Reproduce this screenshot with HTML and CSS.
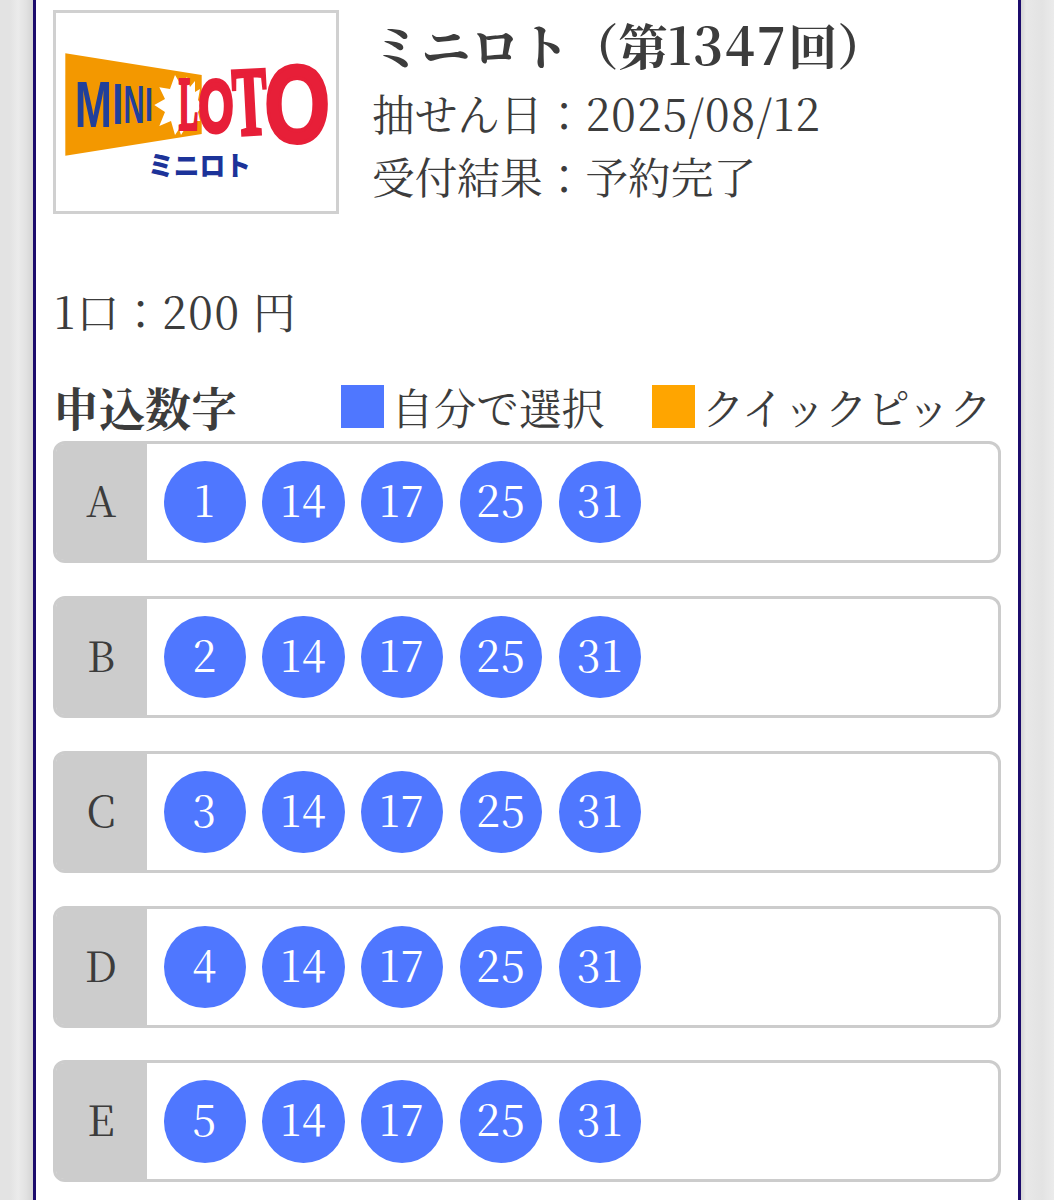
FILE: index.html
```
<!DOCTYPE html>
<html lang="ja">

<head>
    <meta charset="UTF-8">
    <meta name="viewport" content="width=device-width, initial-scale=1.0">
    <title>ミニロト（第1347回）</title>
    <link rel="stylesheet" href="styles.css">
</head>

<body>
    <div id="container">
        <div class="head">
            <div class="logo">
                <svg viewBox="0 0 280 198" width="280" height="198">
                    <polygon class="orange" points="9.3,40.3 145.7,62 145.7,121 9.3,142.7" />
                    <polygon class="burst" points="98.3,92 109,86 103.3,74.3 114,76 119,62 125,72 131,64 134,74 139,68 139,79 144,76 142,87 145.7,92 142,99 144,108 138,108 136,118 130,114 125,122 123,116 119,122 115,108 103.3,113 109,99" />
                    <g class="mini">
                        <text transform="translate(18.7 114.3) scale(.7 1)" font-size="64">M</text>
                        <text transform="translate(56.3 111.3) scale(.7 1)" font-size="57">I</text>
                        <text transform="translate(67.6 109.6) scale(.55 1)" font-size="53">N</text>
                        <text transform="translate(89 108) scale(.6 1)" font-size="48">I</text>
                    </g>
                    <g class="loto">
                        <text class="serif" transform="translate(123 115.5) scale(.39 1)" font-size="73">L</text>
                        <text transform="translate(142.4 118.5) scale(.6 1)" font-size="75">O</text>
                        <text class="serif" transform="translate(178.5 122) rotate(-3) scale(.53 1)" font-size="97">T</text>
                        <text transform="translate(208.6 129) scale(.77 1)" font-size="109">O</text>
                    </g>
                    <text class="kana" x="92" y="163" textLength="103" lengthAdjust="spacingAndGlyphs">ミニロト</text>
                </svg>
            </div>
            <div class="info">
                <h1>ミニロト（第<span class="num">1347</span>回）</h1>
                <p>抽せん日：<span class="num">2025/08/12</span></p>
                <p>受付結果：予約完了</p>
            </div>
        </div>

        <p class="price"><span class="num">1</span>口：<span class="num">200</span><span class="yen">円</span></p>

        <div class="legend">
            <h2>申込数字</h2>
            <div class="item"><span class="mark blue"></span>自分で選択</div>
            <div class="item quick"><span class="mark yellow"></span>クイックピック</div>
        </div>

        <div class="row">
            <div class="label">A</div>
            <ul>
                <li>1</li>
                <li>14</li>
                <li>17</li>
                <li>25</li>
                <li>31</li>
            </ul>
        </div>
        <div class="row">
            <div class="label">B</div>
            <ul>
                <li>2</li>
                <li>14</li>
                <li>17</li>
                <li>25</li>
                <li>31</li>
            </ul>
        </div>
        <div class="row">
            <div class="label">C</div>
            <ul>
                <li>3</li>
                <li>14</li>
                <li>17</li>
                <li>25</li>
                <li>31</li>
            </ul>
        </div>
        <div class="row">
            <div class="label">D</div>
            <ul>
                <li>4</li>
                <li>14</li>
                <li>17</li>
                <li>25</li>
                <li>31</li>
            </ul>
        </div>
        <div class="row">
            <div class="label">E</div>
            <ul>
                <li>5</li>
                <li>14</li>
                <li>17</li>
                <li>25</li>
                <li>31</li>
            </ul>
        </div>
    </div>
</body>

</html>
```
FILE: styles.css
```
* {
    box-sizing: border-box;
    margin: 0;
    padding: 0;
}

body {
    height: 1200px;
    overflow: hidden;
    color: #3c3c3c;
    font-family: "Noto Serif CJK JP", "Liberation Serif", "Noto Sans CJK JP", serif;
    font-size: 42.7px;
    font-weight: 400;
    background: linear-gradient(to right, #e3e3e3 10px, #ebebeb 18px, #e2e2e2 26px, #d4d4d4 33px, #d4d4d4 1021px, #e8e8e8 1026px, #e3e3e3 1042px, #ebebeb 1054px);
}

#container {
    width: 988px;
    height: 1200px;
    margin-left: 33px;
    padding: 10px 17px 0 17px;
    border: solid #1c0c6c;
    border-width: 0 3px;
    background: #fff;
}

.head {
    display: flex;
    height: 204px;
}

.logo {
    width: 286px;
    height: 204px;
    border: solid 3px #d0d0d0;
}

.logo svg {
    display: block;
}

.orange {
    fill: #f39800;
}

.burst {
    fill: #fff;
}

.mini {
    fill: #21409a;
    font-family: "Liberation Sans", sans-serif;
    font-weight: bold;
}

.loto {
    fill: #e71f38;
    stroke: #e71f38;
    stroke-width: 4px;
    font-family: "Liberation Sans", sans-serif;
    font-weight: bold;
}

.serif {
    font-family: "Liberation Serif", serif;
}

.kana {
    fill: #1c3399;
    font-family: "Noto Sans CJK JP", sans-serif;
    font-size: 27px;
    font-weight: 900;
}

.info {
    margin-left: 33px;
    white-space: nowrap;
}

.num {
    font-size: 44px;
    letter-spacing: 1.2px;
}

h1 {
    height: 71px;
    line-height: 66px;
    font-size: 49.3px;
}

h1 .num {
    font-size: 51px;
    letter-spacing: 1.5px;
}

.info p {
    height: 64px;
    line-height: 62px;
}

.price {
    height: 64px;
    margin-top: 66px;
    padding-left: 1px;
    line-height: 60px;
}

.price .num {
    letter-spacing: 1.8px;
}

.yen {
    margin-left: 12px;
}

.legend {
    display: flex;
    height: 63px;
    margin-top: 34px;
    line-height: 57px;
    white-space: nowrap;
}

h2 {
    width: 288px;
    font-size: 46px;
}

.item {
    display: flex;
    margin-right: 47.5px;
}

.quick {
    margin-right: 0;
    letter-spacing: -.7px;
}

.mark {
    width: 43px;
    height: 43px;
    margin: 7px 7px 0 0;
}

.blue {
    background: #4f77ff;
}

.yellow {
    background: #ffa500;
}

.row {
    display: flex;
    width: 948px;
    height: 122px;
    margin-bottom: 32.85px;
    border: solid 3px #ccc;
    border-radius: 12px;
}

.label {
    width: 91px;
    padding-right: 1px;
    line-height: 110px;
    text-align: center;
    font-size: 42px;
    background: #ccc;
    border-radius: 8px 0 0 8px;
}

ul {
    display: flex;
    gap: 16.4px;
    padding: 17px 0 0 16.5px;
    list-style: none;
}

li {
    width: 82.4px;
    height: 82.4px;
    border-radius: 50%;
    color: #fff;
    background: #4f77ff;
    line-height: 76px;
    text-align: center;
    font-size: 43px;
    letter-spacing: 1px;
}
```
